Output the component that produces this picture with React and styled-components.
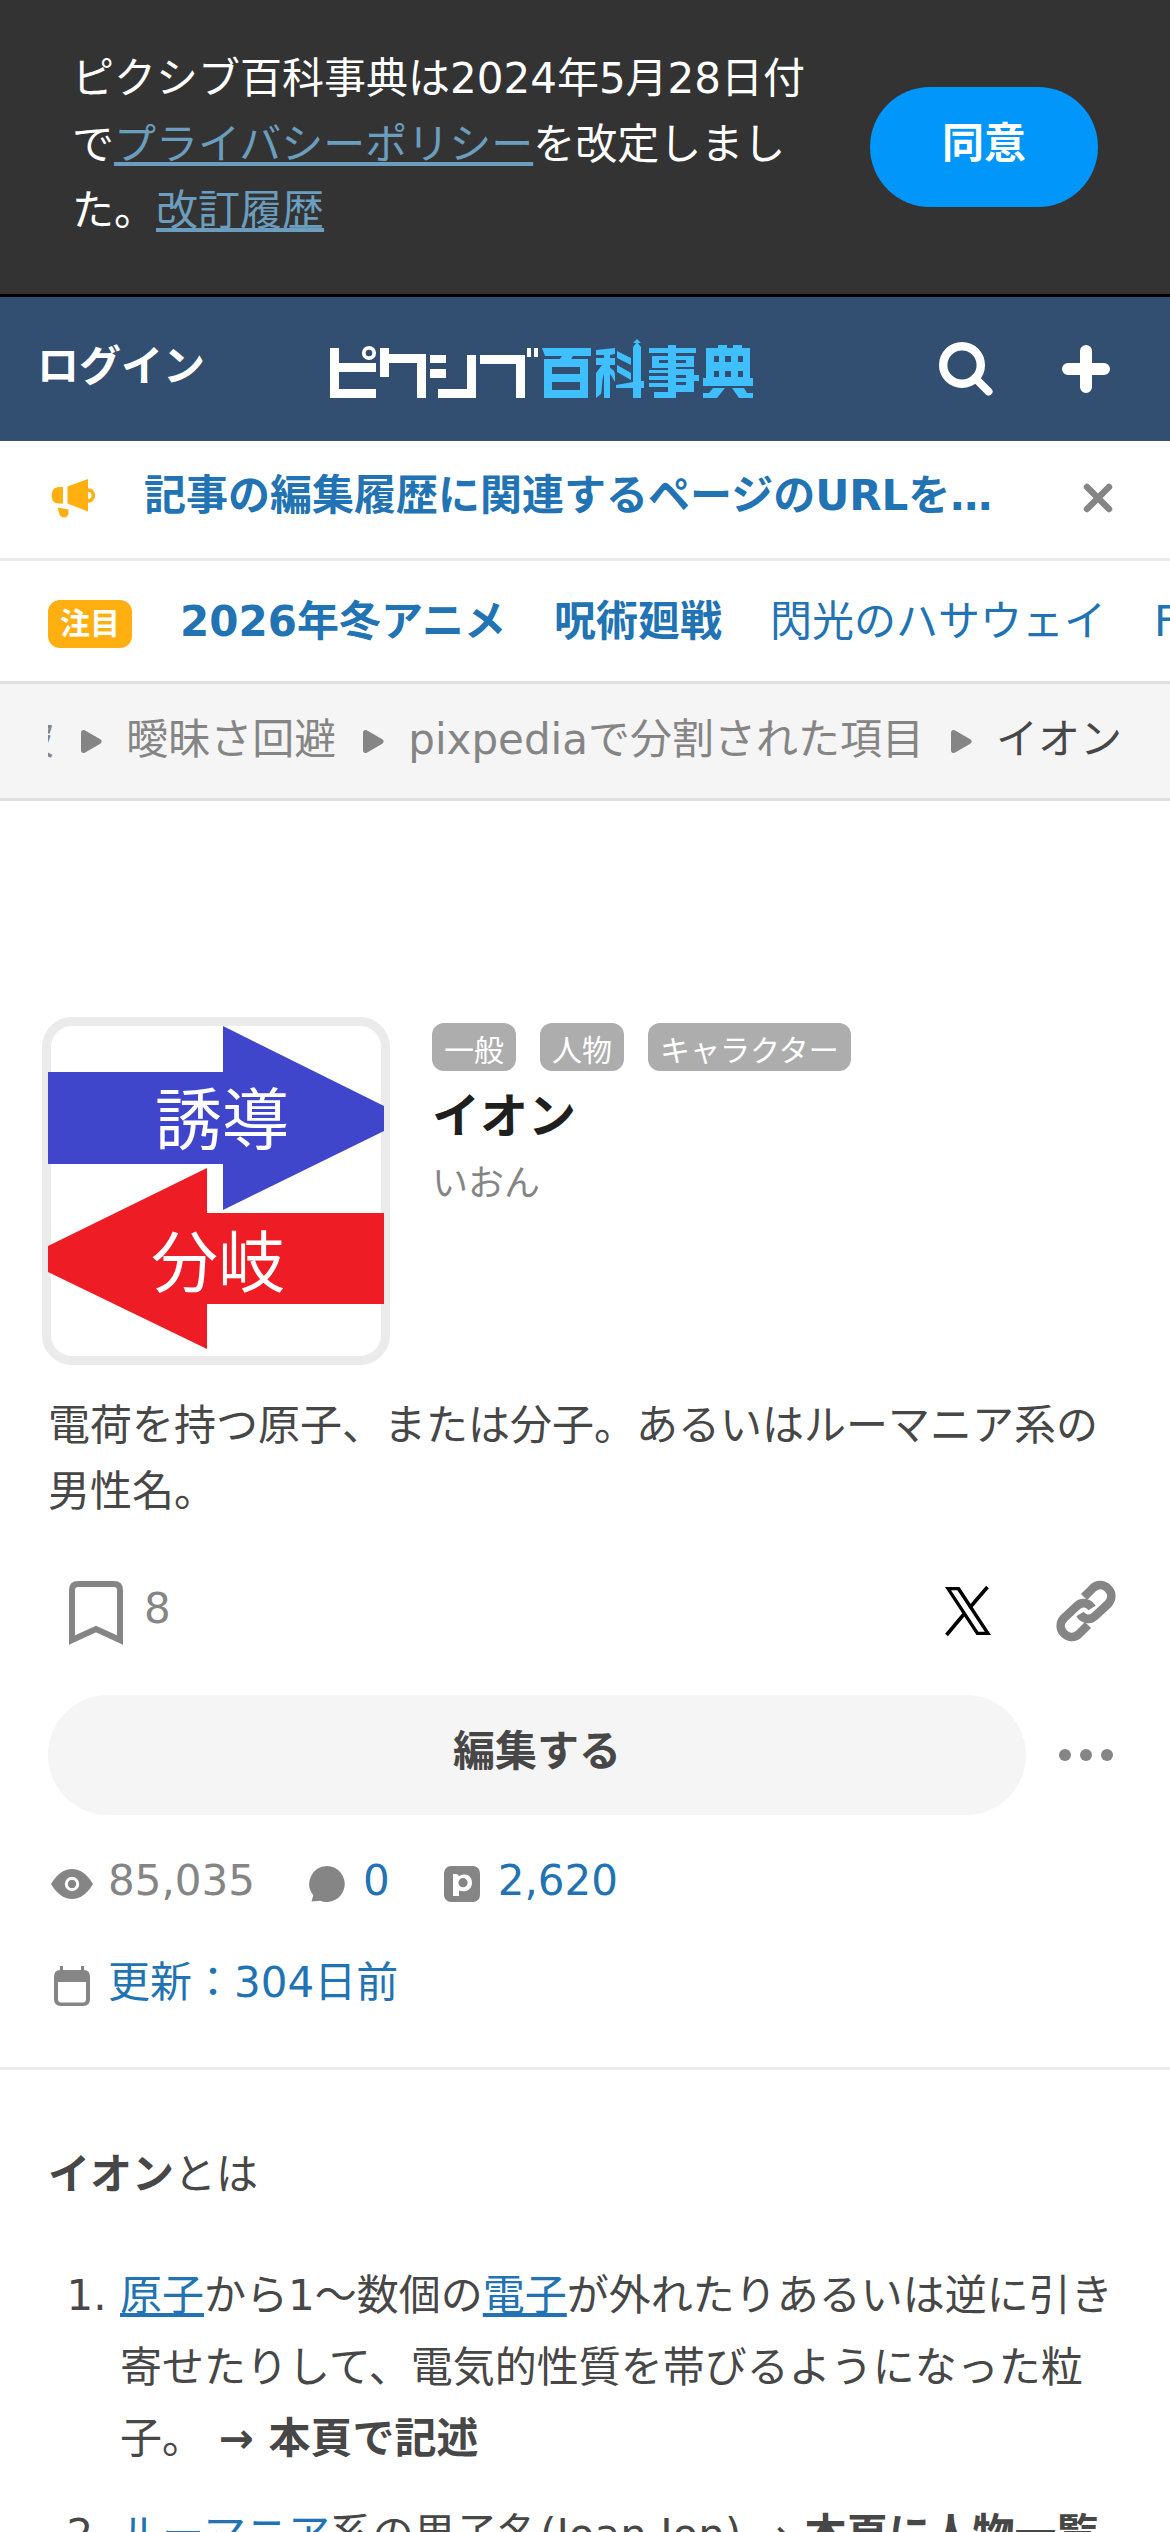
import React from "react";
import styled, { createGlobalStyle, css } from "styled-components";

const c = {
  text1: "#1f1f1f",
  text2: "#474747",
  text3: "#858585",
  link: "#2173b3",
  navy: "#324e70",
  brand: "#0096fa",
  warn: "#ffaf0f",
  line: "#ebebeb",
  pale: "#f5f5f5",
};

const Global = createGlobalStyle`
  *, *::before, *::after { box-sizing: border-box; }
  html, body { margin: 0; padding: 0; background: #fff; }
  body {
    font-family: "DejaVu Sans", "Noto Sans CJK JP", sans-serif;
    font-size: 42px;
    color: ${c.text2};
    overflow: hidden;
  }
  svg { display: block; flex: none; }
`;

const Page = styled.div`
  width: 1170px;
  height: 2532px;
  overflow: hidden;
  display: flex;
  flex-direction: column;
  > * { flex: none; }
`;

const Notice = styled.section`
  height: 297px;
  padding: 0 72px;
  background: #333;
  border-bottom: 3px solid #000;
  display: flex;
  align-items: center;
  justify-content: space-between;
`;
const NoticeText = styled.p`
  margin: 0;
  width: 750px;
  padding-bottom: 5px;
  line-height: 66px;
  color: #fff;
`;
const NoticeLink = styled.a`
  color: #6b9ebe;
  text-decoration: underline;
`;
const Agree = styled.button`
  width: 228px;
  height: 120px;
  border: 0;
  border-radius: 60px;
  background: ${c.brand};
  color: #fff;
  font: bold 42px/66px "DejaVu Sans", "Noto Sans CJK JP", sans-serif;
  padding: 0 0 6px;
`;

const Header = styled.header`
  height: 144px;
  padding: 0 48px 0 36px;
  background: ${c.navy};
  display: flex;
  align-items: center;
`;
const Login = styled.a`
  width: 294px;
  padding-left: 1px;
  padding-bottom: 5px;
  color: #fff;
  font-weight: bold;
  line-height: 66px;
`;
const HeaderIcons = styled.div`
  margin-left: auto;
  display: flex;
  gap: 48px;
`;

const News = styled.div`
  height: 120px;
  padding: 0 36px 3px;
  border-bottom: 3px solid ${c.line};
  display: flex;
  align-items: center;
`;
const NewsTitle = styled.a`
  flex: 1;
  margin-left: 33px;
  padding-bottom: 5px;
  color: ${c.link};
  font-weight: bold;
  line-height: 66px;
  white-space: nowrap;
`;

const Features = styled.nav`
  height: 123px;
  padding-left: 48px;
  border-bottom: 3px solid #e0e0e0;
  display: flex;
  align-items: center;
  gap: 48px;
  overflow: hidden;
  white-space: nowrap;
`;
const Chip = styled.span`
  height: 48px;
  padding: 0 12px;
  border-radius: 12px;
  color: #fff;
  font-size: 30px;
  line-height: 48px;
  ${(p) =>
    p.$featured
      ? css`background: ${c.warn}; font-weight: bold; margin-top: 6px;`
      : css`background: #adadad; padding-top: 4px;`}
`;
const FeatureLink = styled.a`
  flex: none;
  padding-top: 1px;
  color: ${c.link};
  line-height: 66px;
  font-weight: ${(p) => (p.$strong ? "bold" : "normal")};
`;

const Crumbs = styled.nav`
  height: 117px;
  padding: 0 48px;
  background: ${c.pale};
  border-bottom: 3px solid #e0e0e0;
`;
const CrumbTrack = styled.div`
  height: 114px;
  padding-bottom: 3px;
  display: flex;
  align-items: center;
  justify-content: flex-end;
  overflow: hidden;
  white-space: nowrap;
  line-height: 66px;
`;
const Crumb = styled.a`
  flex: none;
  color: ${(p) => (p.$current ? c.text2 : c.text3)};
`;

const Article = styled.main`
  padding: 216px 48px 0;
`;
const Summary = styled.div`
  display: flex;
  margin-left: -6px;
  gap: 42px;
`;
const Thumb = styled.div`
  width: 348px;
  height: 348px;
  border: 9px solid ${c.line};
  border-radius: 30px;
  > svg { margin-left: -3px; }
`;
const SummaryBody = styled.div`
  padding-top: 6px;
`;
const Chips = styled.div`
  display: flex;
  gap: 24px;
`;
const Title = styled.h1`
  margin: 9px 0 0;
  font-size: 48px;
  line-height: 72px;
  color: ${c.text1};
`;
const Reading = styled.div`
  margin-top: 2px;
  font-size: 36px;
  line-height: 60px;
  color: ${c.text3};
`;
const Description = styled.p`
  margin: 28px 0 0;
  line-height: 66px;
`;

const Actions = styled.div`
  height: 72px;
  margin: 50px 0 0;
  padding-left: 12px;
  display: flex;
  align-items: center;
`;
const Count = styled.span`
  margin-left: 12px;
  padding-bottom: 4px;
  line-height: 66px;
  color: ${c.text3};
`;
const Share = styled.div`
  margin-left: auto;
  display: flex;
  gap: 48px;
`;
const EditRow = styled.div`
  margin-top: 48px;
  display: flex;
  align-items: center;
  gap: 24px;
`;
const EditButton = styled.button`
  width: 978px;
  height: 120px;
  border: 0;
  border-radius: 60px;
  background: ${c.pale};
  color: ${c.text2};
  font: bold 42px/66px "DejaVu Sans", "Noto Sans CJK JP", sans-serif;
  padding: 0 0 6px;
`;
const Stats = styled.div`
  margin-top: 18px;
  display: flex;
  flex-wrap: wrap;
  column-gap: 48px;
`;
const Stat = styled.div`
  height: 102px;
  display: flex;
  align-items: center;
  gap: 12px;
  color: ${(p) => (p.$link ? c.link : c.text3)};
  flex-basis: ${(p) => (p.$wide ? "100%" : "auto")};
  > span { line-height: 66px; padding-bottom: 6px; }
`;

const Content = styled.section`
  margin-top: 30px;
  border-top: 3px solid ${c.line};
  padding: 69px 48px 0;
  line-height: 71.4px;
`;
const Lead = styled.p`
  margin: 0;
`;
const List = styled.ol`
  margin: 50px 0 0;
  padding-left: 72px;
  > li { margin-bottom: 24px; }
`;
const BodyLink = styled.a`
  color: ${c.link};
  text-decoration: underline;
`;

const Logo = () => (
  <svg width="426" height="60" viewBox="0 0 426 60">
    <g fill="#fff">
      <path d="M0 9h9v15h37v9H9v17h37v9H0z" />
      <path d="M50 9h9v6h37v44h-9V24H59v14h-9z" />
      <path d="M100 16h16v8h-16zM100 30h16v9h-16zM137 16h9v43h-38v-9h29z" />
      <path d="M150 16h45v43h-9V25h-36z" />
      <path d="M197 9h4v9h-4zM204 9h4v9h-4z" />
    </g>
    <circle cx="39" cy="14" r="5.2" fill="none" stroke="#fff" strokeWidth="3.8" />
    <g fill="#40bfff" fillRule="evenodd">
      <path d="M212 9h49v8h-18l-2 3h17v39h-44V20h16l2-3h-17zM222 28v7h28v-7zM222 43v8h28v-8z" />
      <path d="M266 11l19-2v6l-5 1v3h5v7h-5v3c4 2 5 4 5 7v7c-2-3-3-6-5-8v24h-6V35c-2 3-2 18-3 20l-5 4V34l6-8h-6v-7h8v-3h-8zM287 12l14 7v7l-14-7zM287 26l14 8v7l-14-8zM286 46l17-3V8l4-5 4 5v34h3v7h-3v10h-8V49h-17z" />
      <path d="M303 4l4-4 4 4z" />
      <path d="M319 9h19V6h8v3h20v5h-20v3h18v11h-18v2h18v6h5v6h-5v11h-18v6h-22v-6h14v-5h-19v-4h19v-3h-19v-4h19v-3h-19v-3h19v-2h-16V17h16v-3h-19zM329 21v3h9v-3zM346 21v3h10v-3zM346 36v3h10v-3zM346 43v3h10v-3z" />
      <path d="M376 9h12V6h9v3h6V6h9v3h8v30h3v8h-50v-8h3zM384 17v6h5v-6zM395 17v6h6v-6zM408 17v6h5v-6zM384 32v6h5v-6zM395 32v6h6v-6zM408 32v6h5v-6zM383 49h12l-8 10h-14v-5h6zM402 49h12l3 5h6v5h-14z" />
    </g>
  </svg>
);

const SearchIcon = () => (
  <svg width="72" height="72" viewBox="0 0 72 72" fill="none" stroke="#fff">
    <circle cx="32" cy="32" r="18.8" strokeWidth="8.4" />
    <path d="M45 45l13.500 13.500" strokeWidth="8" strokeLinecap="round" />
  </svg>
);
const PlusIcon = () => (
  <svg width="72" height="72" viewBox="0 0 72 72">
    <path d="M36 18v36M18 36h36" stroke="#fff" strokeWidth="12" strokeLinecap="round" />
  </svg>
);
const MegaphoneIcon = () => (
  <svg width="75" height="72" viewBox="0 -7.5 75 72" fill={c.warn}>
    <path d="M27 17.500V34H23c-5 0-7.300-3-7.300-8s2.300-8.500 7.300-8.500zM31.500 17L52 9.500V42L31.500 34z" />
    <path d="M52 20.500c7 0 7 11 0 11" fill="none" stroke={c.warn} strokeWidth="3.500" />
    <path d="M21.500 38l11 2v4c-1 5-7 5-9 1z" />
  </svg>
);
const CloseIcon = () => (
  <svg width="72" height="72" viewBox="0 0 72 72">
    <path d="M25 25l22 22M47 25L25 47" stroke={c.text3} strokeWidth="6.500" strokeLinecap="round" />
  </svg>
);
const Separator = () => (
  <svg width="72" height="36" viewBox="0 0 72 36">
    <path d="M29.500 10.500l15.500 9-15.500 9z" fill={c.text3} stroke={c.text3} strokeWidth="5" strokeLinejoin="round" />
  </svg>
);

const SignText = styled.text`
  font-family: "Noto Sans CJK JP", sans-serif;
  font-size: 67px;
  font-weight: 400;
  fill: #fff;
`;
const Signs = () => (
  <svg width="336" height="330" viewBox="0 0 336 330">
    <path d="M0 46h175V0l161 80v25L175 184v-46H0z" fill="#4046cb" />
    <path d="M336 187H159v-45L0 220v26l159 77v-45h177z" fill="#ee1c25" />
    <SignText x="107" y="118">誘導</SignText>
    <SignText x="103" y="261">分岐</SignText>
  </svg>
);

const BookmarkIcon = () => (
  <svg width="72" height="72" viewBox="0 0 72 72">
    <path d="M12 65V15q0-6 6-6h36q6 0 6 6v50L36 54z" fill="none" stroke={c.text3} strokeWidth="6" />
  </svg>
);
const XIcon = () => (
  <svg width="72" height="72" viewBox="0 0 72 72">
    <path d="M15 12h14.500L61 60H46.500zM21 15.300L48.400 56.700h6.400L27.400 15.300z" fillRule="evenodd" />
    <path d="M57.500 12L39.500 33M34.500 38.500L16.500 60" stroke="#000" strokeWidth="3.600" />
  </svg>
);
const LinkIcon = () => (
  <svg width="72" height="72" viewBox="0 0 72 72" fill="none" stroke={c.text3} strokeWidth="8.600">
    <path d="M34 22l9-9c10-9 25 5 15 16L45 41c-5 5-12 3-15-2" strokeLinecap="butt" />
    <path d="M38 50l-9 9c-10 9-25-5-15-16l13-12c5-5 12-3 15 2" />
  </svg>
);
const DotsIcon = () => (
  <svg width="72" height="72" viewBox="0 0 72 72" fill={c.text3}>
    <circle cx="15" cy="36" r="6" />
    <circle cx="36" cy="36" r="6" />
    <circle cx="57" cy="36" r="6" />
  </svg>
);
const EyeIcon = () => (
  <svg width="48" height="48" viewBox="0 0 48 48">
    <path d="M3 24Q12 9 24 9t21 15Q36 39 24 39T3 24z" fill={c.text3} />
    <circle cx="24" cy="24" r="5.700" fill={c.text3} stroke="#fff" strokeWidth="3" />
  </svg>
);
const CommentIcon = () => (
  <svg width="48" height="48" viewBox="0 0 48 48" fill={c.text3}>
    <path d="M24 6a18 18 0 1 1-7 34.700L8.500 41.500l1.800-6.200A18 18 0 0 1 24 6z" />
  </svg>
);
const PixivIcon = () => (
  <svg width="48" height="48" viewBox="0 0 48 48">
    <rect x="6" y="6" width="36" height="36" rx="7" fill={c.text3} />
    <path d="M15 14h4l2 2c7-4 13 0 13 6.500 0 7-6 10.500-13 8V36h-6z" fill="#fff" />
    <circle cx="25" cy="22.700" r="4.600" fill={c.text3} />
  </svg>
);
const CalendarIcon = () => (
  <svg width="48" height="48" viewBox="0 0 48 48">
    <path d="M12 4h3v4h18V4h3v4q6 0 6 7v22q0 7-7 7H13q-7 0-7-7V15q0-7 6-7zM10 20v17q0 3.500 3 3.500h22q3 0 3-3.500V20z" fill={c.text3} fillRule="evenodd" />
  </svg>
);

export default function App() {
  return (
    <>
      <Global />
      <Page lang="ja">
        <Notice>
          <NoticeText>
            ピクシブ百科事典は2024年5月28日付で<NoticeLink>プライバシーポリシー</NoticeLink>を改定しました。<NoticeLink>改訂履歴</NoticeLink>
          </NoticeText>
          <Agree>同意</Agree>
        </Notice>
        <Header>
          <Login>ログイン</Login>
          <Logo />
          <HeaderIcons>
            <SearchIcon />
            <PlusIcon />
          </HeaderIcons>
        </Header>
        <News>
          <MegaphoneIcon />
          <NewsTitle>記事の編集履歴に関連するページのURLを…</NewsTitle>
          <CloseIcon />
        </News>
        <Features>
          <Chip $featured>注目</Chip>
          <FeatureLink $strong>2026年冬アニメ</FeatureLink>
          <FeatureLink $strong>呪術廻戦</FeatureLink>
          <FeatureLink>閃光のハサウェイ</FeatureLink>
          <FeatureLink>Fate</FeatureLink>
        </Features>
        <Crumbs>
          <CrumbTrack>
            <Crumb>破</Crumb>
            <Separator />
            <Crumb>曖昧さ回避</Crumb>
            <Separator />
            <Crumb>pixpediaで分割された項目</Crumb>
            <Separator />
            <Crumb $current>イオン</Crumb>
          </CrumbTrack>
        </Crumbs>
        <Article>
          <Summary>
            <Thumb>
              <Signs />
            </Thumb>
            <SummaryBody>
              <Chips>
                <Chip>一般</Chip>
                <Chip>人物</Chip>
                <Chip>キャラクター</Chip>
              </Chips>
              <Title>イオン</Title>
              <Reading>いおん</Reading>
            </SummaryBody>
          </Summary>
          <Description>電荷を持つ原子、または分子。あるいはルーマニア系の男性名。</Description>
          <Actions>
            <BookmarkIcon />
            <Count>8</Count>
            <Share>
              <XIcon />
              <LinkIcon />
            </Share>
          </Actions>
          <EditRow>
            <EditButton>編集する</EditButton>
            <DotsIcon />
          </EditRow>
          <Stats>
            <Stat>
              <EyeIcon />
              <span>85,035</span>
            </Stat>
            <Stat $link>
              <CommentIcon />
              <span>0</span>
            </Stat>
            <Stat $link>
              <PixivIcon />
              <span>2,620</span>
            </Stat>
            <Stat $link $wide>
              <CalendarIcon />
              <span>更新：304日前</span>
            </Stat>
          </Stats>
        </Article>
        <Content>
          <Lead>
            <b>イオン</b>とは
          </Lead>
          <List>
            <li>
              <BodyLink>原子</BodyLink>から1〜数個の<BodyLink>電子</BodyLink>が外れたりあるいは逆に引き寄せたりして、電気的性質を帯びるようになった粒子。<b> → 本頁で記述</b>
            </li>
            <li>
              <BodyLink>ルーマニア</BodyLink>系の男子名(Ioan,Ion) →<b> 本頁に人物一覧</b>
            </li>
          </List>
        </Content>
      </Page>
    </>
  );
}
